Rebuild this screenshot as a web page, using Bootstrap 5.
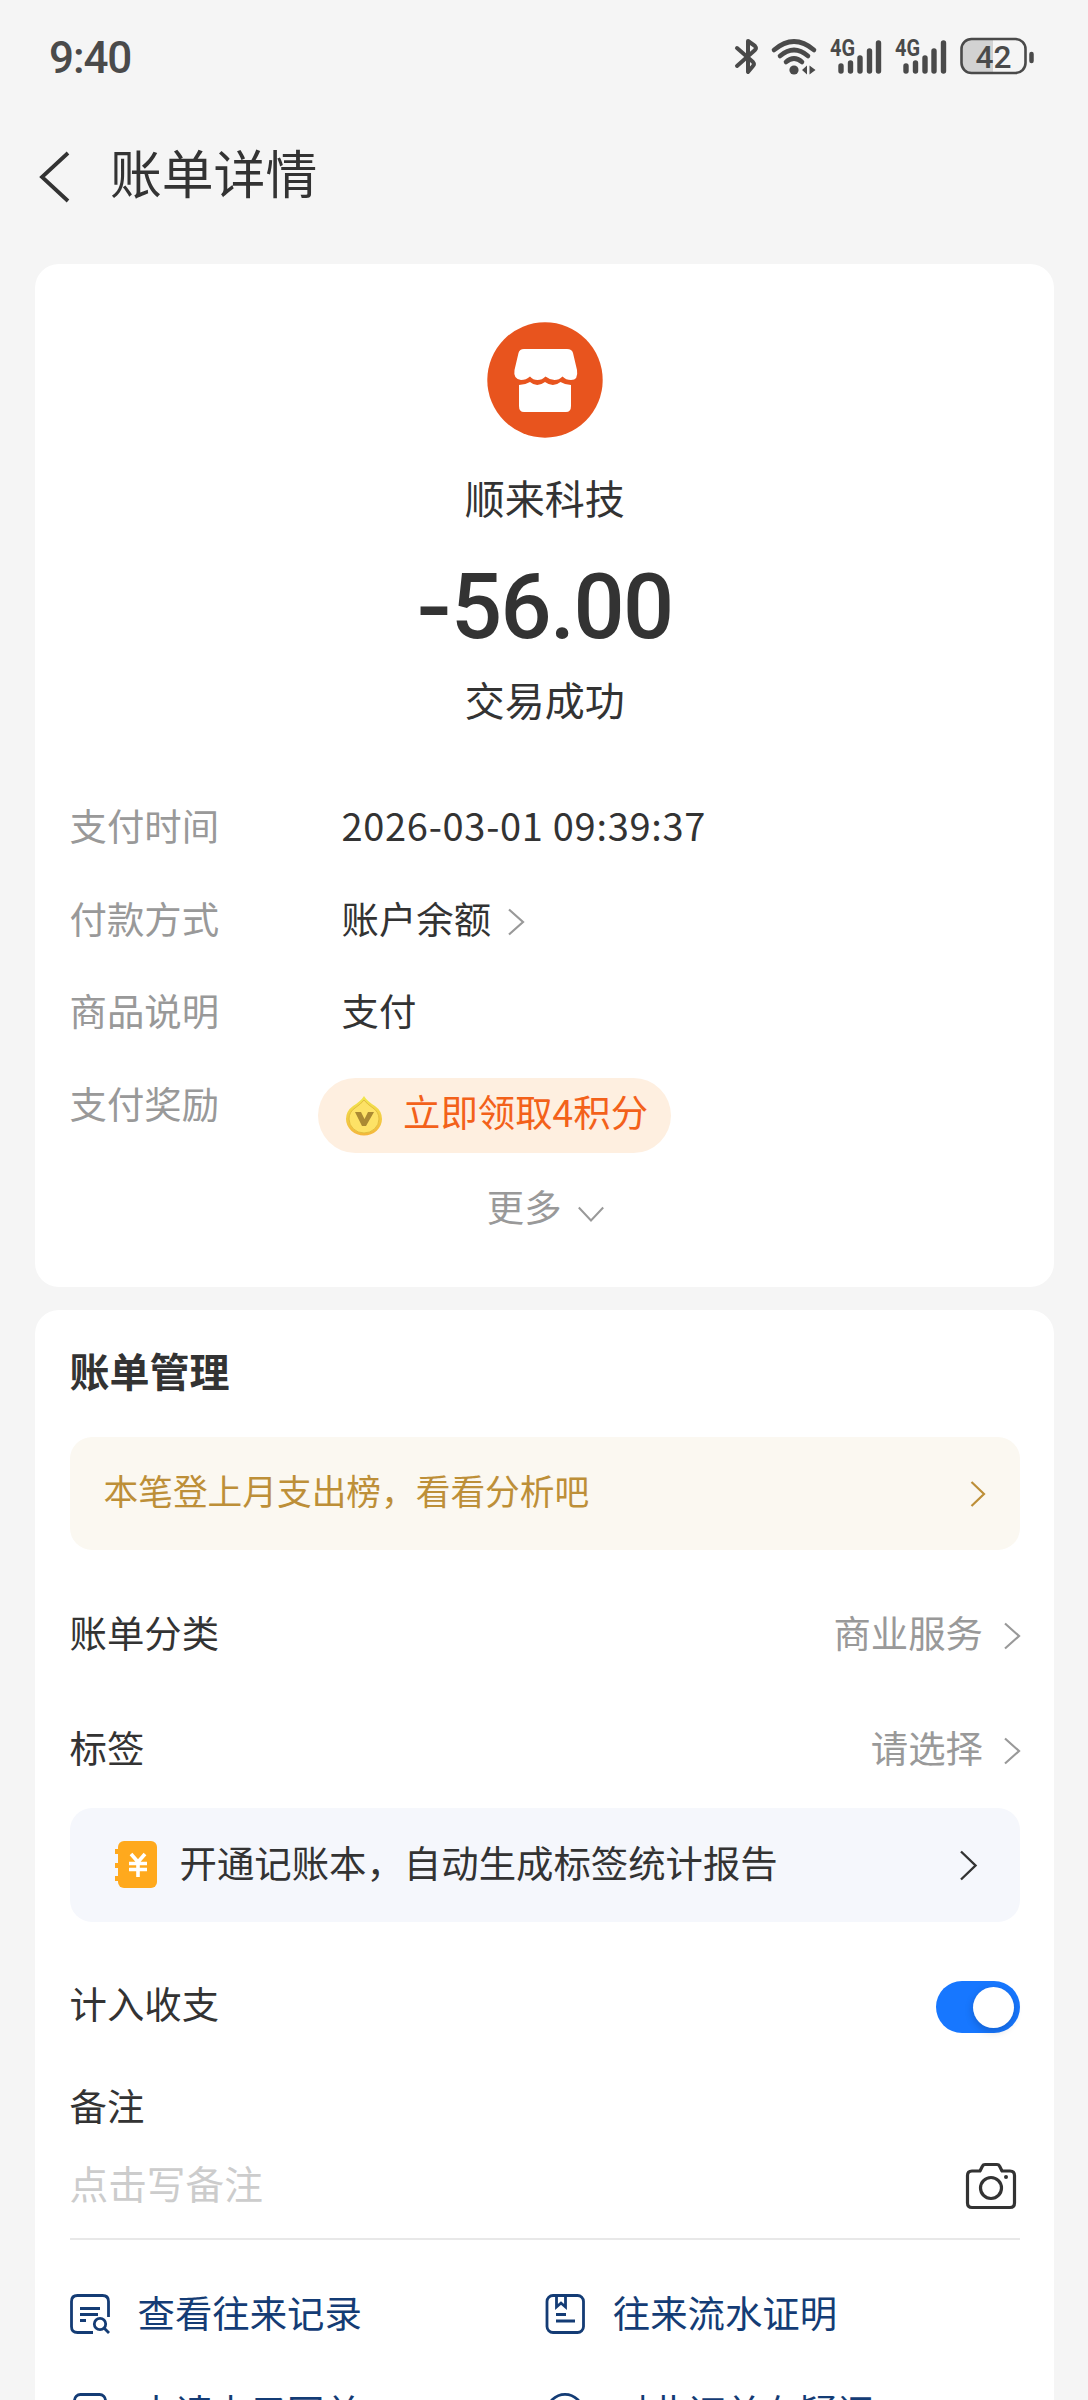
<!DOCTYPE html>
<html lang="zh-CN">
<head>
<meta charset="utf-8">
<meta name="viewport" content="width=device-width, initial-scale=1">
<title>账单详情</title>
<link href="https://cdn.jsdelivr.net/npm/bootstrap@5.3.0/dist/css/bootstrap.min.css" rel="stylesheet">
<style>
  html, body { height: 2400px; overflow: hidden; }
  body { background: #f5f5f5; color: #333; font-family: "Noto Sans CJK SC", sans-serif; font-size: 37.4px; line-height: 56px; }
  svg { display: block; flex: none; overflow: visible; }
  .statusbar { height: 112px; padding: 0 51px 0 49px; color: #4a4a4a; }
  .clock { font-size: 44px; font-weight: 500; letter-spacing: -1.1px; font-family: Roboto, sans-serif; padding-top: 3px; }
  .titlebar { height: 152px; padding: 0 37px 22px; gap: 39px; }
  .titlebar h1 { font-size: 51.8px; font-weight: 400; line-height: 70px; padding-bottom: 10px; }
  .panel { margin: 0 34px 0 35px; border-radius: 24px; padding: 0 34px 0 34.5px; }
  .panel-bill { height: 1023px; padding-top: 58px; margin-bottom: 23px; }
  .panel-manage { height: 1200px; padding-top: 30px; }
  .payee { font-size: 40px; line-height: 60px; margin-top: 29px; }
  .amount { font-family: Roboto, sans-serif; font-weight: 500; font-size: 90px; line-height: 100px; margin-top: 31px; letter-spacing: -1.6px; padding-left: 2px; }
  .minus { display: inline-block; transform: scaleX(1.15); padding-right: 3px; }
  .state { font-size: 40px; line-height: 60px; margin-top: 11px; }
  .facts { margin-top: 68px; }
  .fact { height: 92.6px; }
  .fact dt { width: 272px; font-weight: 400; color: #999; }
  .fact dd { margin: 0; }
  .stamp { font-size: 38px; letter-spacing: .7px; }
  .reward { height: 75px; width: 353px; margin: 3px 0 0 -23.5px; padding: 0 0 8px 27px; background: #feefe0; color: #f3611a; }
  .reward svg { margin-top: 10px; }
  .more { margin-top: 11px; padding-left: 1px; }
  .more svg { margin: 27px 0 0 16px; }
  .grey { color: #999; }
  .heading { font-size: 40px; font-weight: 700; line-height: 60px; }
  .tip { height: 113px; margin-top: 37px; padding: 0 34px 0 34px; border-radius: 22px; background: #fbf8f1; color: #bd8f38; font-size: 34.7px; }
  .tip span { padding-bottom: 8px; }
  .category { height: 115px; }
  .tip + .category { margin-top: 54px; }
  .chev { margin: 18px -1px 0 20px; }
  .category + .ledger { margin-top: -26px; }
  .ledger { height: 114px; padding: 0 42px 0 45px; border-radius: 22px; background: #f5f7fc; }
  .ledger-text { padding: 0 0 7px 22px; }
  .income { margin-top: 55px; height: 60px; }
  .income > span { padding-bottom: 9px; }
  .toggle { width: 84px; height: 52px; border-radius: 26px; background: #1777ff; padding: 0 6px; }
  .knob { width: 41px; height: 41px; border-radius: 50%; background: #fff; box-shadow: 0 3px 8px rgba(0,0,0,.2); }
  .remark { margin-top: 40px; }
  .note { height: 107px; padding-top: 21px; font-size: 38.7px; color: #ccc; border-bottom: 2px solid #e8e8e8; }
  .camera { margin: 9px 4px 0 0; }
  .actions { color: #143c75; margin-top: 44px; row-gap: 43px; }
  .actions svg { margin-top: 4px; }
  .act { margin-left: 28px; }
</style>
</head>
<body>
<header>
  <div class="statusbar d-flex align-items-center justify-content-between">
    <div class="clock">9:40</div>
    <svg width="304" height="44" viewBox="0 0 304 44" fill="none" stroke="#4a4a4a" stroke-linecap="round" stroke-linejoin="round">
      <path stroke-width="4" d="M4 14 20 28a3 3 0 0 1 0 4l-5 6V7l7 5a3 3 0 0 1 0 4L4 32"/>
      <g stroke-width="4.600"><path d="M41 16Q61-1 81 16"/><path d="M47 22Q61 10 75 22"/><path d="M53 28Q61 21 69 28"/></g>
      <circle cx="61" cy="36" r="4.600" fill="#4a4a4a" stroke="none"/>
      <path d="M69 36l5-4.500v9zM76.500 31.500v9l6-4.500z" fill="#4a4a4a" stroke="none"/>
      <path stroke-width="5.400" d="M108 32v5M117.500 29v8M127 24v13M136.500 17v20M145.500 9v28"/>
      <path stroke-width="5.400" d="M173 32v5M182.500 29v8M192 24v13M201 17v20M210.500 9v28"/>
      <g fill="#4a4a4a" stroke="none" font-family="Roboto, sans-serif" font-weight="700" font-size="23">
        <text x="97" y="22" textLength="25" lengthAdjust="spacingAndGlyphs">4G</text>
        <text x="162" y="22" textLength="25" lengthAdjust="spacingAndGlyphs">4G</text>
      </g>
      <path d="M238 5.500h22v33h-22a9 9 0 0 1-9-9v-15a9 9 0 0 1 9-9z" fill="#d2d2d2" stroke="none"/>
      <rect x="228.500" y="5" width="64" height="34" rx="10" stroke-width="2.600"/>
      <path d="M298.500 20v7" stroke-width="4.500"/>
      <text x="242.500" y="33.500" fill="#4a4a4a" stroke="none" font-family="Roboto, sans-serif" font-weight="500" font-size="32" textLength="36" lengthAdjust="spacingAndGlyphs">42</text>
    </svg>
  </div>
  <div class="titlebar d-flex align-items-center">
    <svg width="34" height="52" viewBox="0 0 34 52" fill="none" stroke="#333" stroke-width="3.800"><path d="M31 2 5 26l26 24"/></svg>
    <h1 class="mb-0">账单详情</h1>
  </div>
</header>

<main>
  <section class="panel panel-bill bg-white">
    <div class="d-flex flex-column align-items-center text-center">
      <svg width="116" height="116" viewBox="0 0 116 116">
        <circle cx="58" cy="58" r="57.700" fill="#e8541e"/>
        <path fill="#fff" d="M37 27h43q5 0 6 4l4 17q1.500 10-6 10-5 0-8.500-3.500Q72 58 67.500 58T58.500 54.500Q55 58 50.500 58T43 54.500Q39 58 34 58q-8-1-6.500-10l4-17q1-4 5.500-4z"/>
        <path fill="#fff" d="M32 63q6 0 11-3 7 6 15 0 8 6 15.500 0 5 3 10.500 3v21q0 6-5 6H37q-5 0-5-6z"/>
      </svg>
      <div class="payee">顺来科技</div>
      <div class="amount"><span class="minus">-</span>56.00</div>
      <div class="state">交易成功</div>
    </div>
    <dl class="facts mb-0">
      <div class="fact d-flex"><dt>支付时间</dt><dd class="stamp">2026-03-01 09:39:37</dd></div>
      <div class="fact d-flex"><dt>付款方式</dt><dd class="d-flex">账户余额
        <svg class="ms-3 mt-3" width="18" height="28" viewBox="0 0 18 28" fill="none" stroke="#999" stroke-width="2.200"><path d="M2 3.500 16 16 2 28.500"/></svg></dd></div>
      <div class="fact d-flex"><dt>商品说明</dt><dd>支付</dd></div>
      <div class="fact d-flex"><dt>支付奖励</dt><dd>
        <div class="reward rounded-pill d-flex align-items-center">
          <svg width="38" height="42" viewBox="0 0 38 42">
            <defs><linearGradient id="gold" x2="0" y2="1"><stop stop-color="#f1e84f"/><stop offset="1" stop-color="#f4b63c"/></linearGradient></defs>
            <path d="M19 1Q22 6 30 11q7 5 7 13A18 16.500 0 0 1 1 24q0-8 7-13Q16 6 19 1z" fill="url(#gold)"/>
            <path d="M19 5Q22 9 28 13q6 4 6 11a15 14 0 0 1-30 0q0-7 6-11 6-4 9-8z" fill="#fde266" stroke="#e3bd3f"/>
            <path d="M10 17h6l3.500 7 3.500-7h6l-8 14h-4z" fill="#ab8a33"/>
          </svg>
          <span class="ms-3 ps-1">立即领取4积分</span>
        </div></dd></div>
    </dl>
    <div class="more d-flex justify-content-center grey">更多
      <svg width="26" height="18" viewBox="0 0 26 18" fill="none" stroke="#999" stroke-width="2"><path d="M.800 2.500 13 15.500 25.200 2.500"/></svg>
    </div>
  </section>

  <section class="panel panel-manage bg-white">
    <h2 class="heading m-0">账单管理</h2>
    <div class="tip d-flex align-items-center justify-content-between">
      <span>本笔登上月支出榜，看看分析吧</span>
      <svg width="16" height="26" viewBox="0 0 16 26" fill="none" stroke="#bd8f38" stroke-width="2.200"><path d="M1.500 1 14 13 1.500 25"/></svg>
    </div>
    <div class="category d-flex justify-content-between">
      <span>账单分类</span>
      <span class="grey d-flex">商业服务<svg class="chev" width="18" height="28" viewBox="0 0 18 28" fill="none" stroke="#999" stroke-width="2.200"><path d="M2 1.500 16 14 2 26.500"/></svg></span>
    </div>
    <div class="category d-flex justify-content-between">
      <span>标签</span>
      <span class="grey d-flex">请选择<svg class="chev" width="18" height="28" viewBox="0 0 18 28" fill="none" stroke="#999" stroke-width="2.200"><path d="M2 1.500 16 14 2 26.500"/></svg></span>
    </div>
    <div class="ledger d-flex align-items-center">
      <svg width="43" height="48" viewBox="0 0 43 48">
        <rect x="3" width="39" height="47" rx="6" fill="#ffa91d"/>
        <path d="M0 8h4v5H0zM0 22h4v5H0zM0 35h4v5H0z" fill="#ffa91d"/>
        <path d="M16 13l7 8 7-8M23 20v16M14 22.500h18M14 28.500h18" fill="none" stroke="#fff" stroke-width="3.600"/>
      </svg>
      <span class="ledger-text flex-grow-1">开通记账本，自动生成标签统计报告</span>
      <svg width="19" height="31" viewBox="0 0 19 31" fill="none" stroke="#333" stroke-width="2.400"><path d="M2 1.500 16.500 15.500 2 29.500"/></svg>
    </div>
    <div class="income d-flex align-items-center justify-content-between">
      <span>计入收支</span>
      <div class="toggle d-flex align-items-center justify-content-end" role="switch" aria-checked="true"><div class="knob"></div></div>
    </div>
    <div class="remark">备注</div>
    <div class="note d-flex justify-content-between">
      <span>点击写备注</span>
      <svg class="camera" width="50" height="46" viewBox="0 0 50 46" fill="none" stroke="#333" stroke-width="3.200">
        <path stroke-linejoin="round" d="M6 8h8l2.500-5q.700-1.500 2.500-1.500h12q1.800 0 2.500 1.500L36 8h8q4.500 0 4.500 4.500V40q0 4.500-4.500 4.500H6q-4.500 0-4.500-4.500V12.500Q1.500 8 6 8z"/>
        <circle cx="25" cy="25" r="10.500"/><circle cx="40" cy="14" r="2" fill="#333" stroke="none"/>
      </svg>
    </div>
    <div class="actions row gx-0">
      <div class="col-6 d-flex align-items-center">
        <svg width="40" height="40" viewBox="0 0 40 40" fill="none" stroke="#143c75" stroke-width="2.800">
          <path d="M23 38.500H7.500q-6 0-6-6v-25q0-6 6-6h25q6 0 6 6V23"/><path d="M10 14.500h20M10 20.500h18M10 26.500h6"/><circle cx="30" cy="30" r="5.700"/><path d="M34 34l5 5"/>
        </svg><span class="act">查看往来记录</span>
      </div>
      <div class="col-6 d-flex align-items-center">
        <svg width="40" height="40" viewBox="0 0 40 40" fill="none" stroke="#143c75" stroke-width="2.800">
          <rect x="2" y="1.500" width="36.500" height="37" rx="6"/><path d="M11.500 2v11l4.500-4 4.500 4V2M11 20.500h10M11 27h19"/>
        </svg><span class="act">往来流水证明</span>
      </div>
      <div class="col-6 d-flex align-items-center">
        <svg width="40" height="40" viewBox="0 0 40 40" fill="none" stroke="#143c75" stroke-width="2.800">
          <rect x="4.500" y="1.500" width="31" height="37" rx="6"/><path d="M12 14h16M12 21h16"/>
        </svg><span class="act">申请电子回单</span>
      </div>
      <div class="col-6 d-flex align-items-center">
        <svg width="40" height="40" viewBox="0 0 40 40" fill="none" stroke="#143c75" stroke-width="2.800">
          <circle cx="20" cy="19" r="17.700"/><path d="M12 22q8 8 16 0"/>
        </svg><span class="act">对此订单有疑问</span>
      </div>
    </div>
  </section>
</main>
<script src="https://cdn.jsdelivr.net/npm/bootstrap@5.3.0/dist/js/bootstrap.bundle.min.js"></script>
</body>
</html>
